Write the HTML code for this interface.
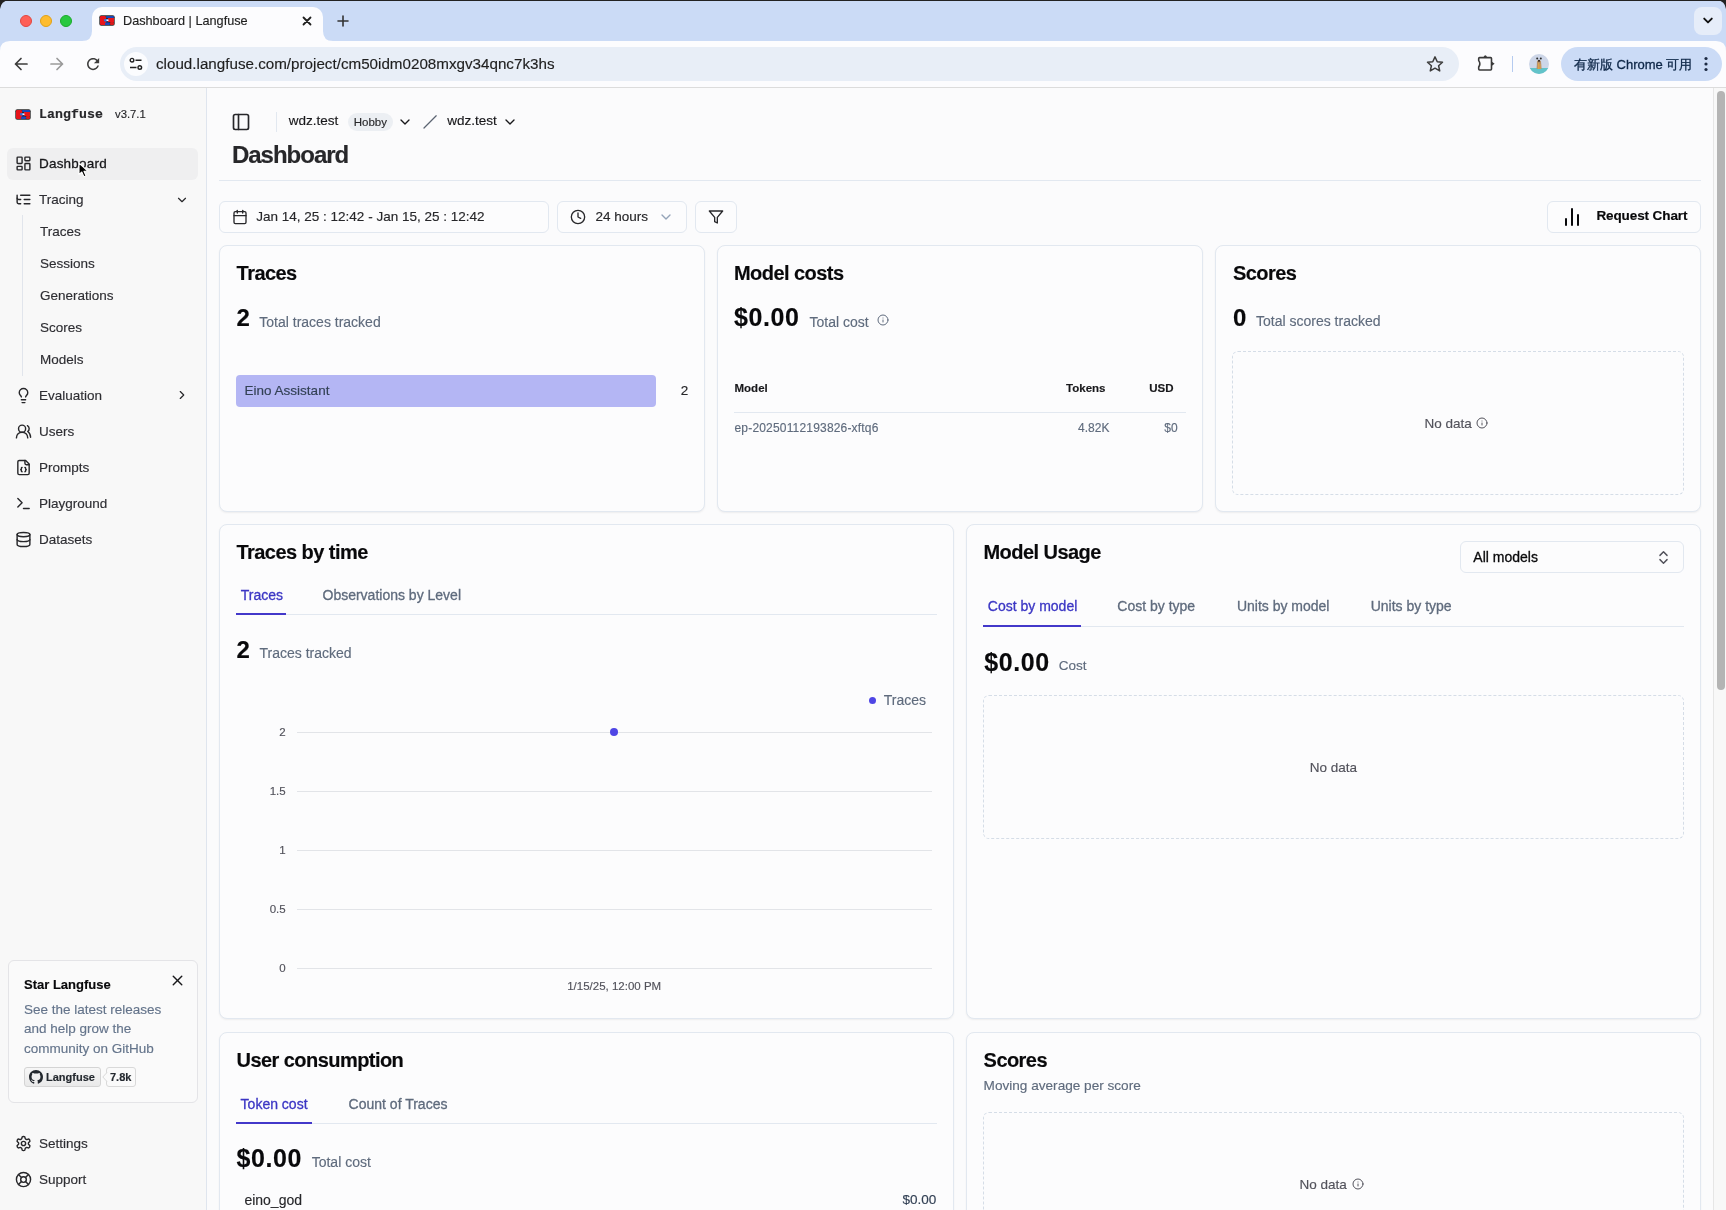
<!DOCTYPE html>
<html><head><meta charset="utf-8"><title>Dashboard | Langfuse</title>
<style>
*{box-sizing:border-box;margin:0;padding:0}
html,body{width:1726px;height:1210px;overflow:hidden;background:#fbfbfc;font-family:"Liberation Sans",sans-serif;color:#0f172a}
body{will-change:transform}
.a{-webkit-text-stroke:0.15px currentColor}
.a{position:absolute;white-space:nowrap}
svg{position:absolute;overflow:visible}
.ic{fill:none;stroke:currentColor;stroke-width:2;stroke-linecap:round;stroke-linejoin:round}
/* chrome */
#topline{left:0;top:0;width:1726px;height:1px;background:#222}
#tabstrip{left:0;top:1px;width:1726px;height:40px;background:#cbdbf6}
#toolbar{left:0;top:41px;width:1726px;height:46px;background:#fcfcfe}
#tbborder{left:0;top:87px;width:1726px;height:1px;background:#dcdcdc}
#tab{left:92px;top:7px;width:231px;height:36px;background:#fcfcfe;border-radius:10px 10px 0 0}
#omni{left:120px;top:47px;width:1339px;height:34px;background:#e8eef7;border-radius:17px}
#chromepill{left:1561px;top:47px;width:161px;height:34px;background:#cbdbf6;border-radius:17px}
/* sidebar */
#sidebar{left:0;top:88px;width:207px;height:1122px;background:#f8f8f8;border-right:1px solid #dfe5ee}
.nav{font-size:13.5px;color:#2e2e33}
.sub{font-size:13.5px;color:#2e2e33}
/* main */
.card{position:absolute;background:#fcfcfd;border:1px solid #e2e8f0;border-radius:8px}
.ttl{font-size:20px;font-weight:700;letter-spacing:-0.55px;color:#09090b}
.big{font-size:24px;font-weight:700;color:#09090b}
.muted{font-size:14px;color:#64748b}
.tab{font-size:14px;color:#64748b}
.tabA{font-size:14px;color:#4338ca}
.btn{position:absolute;border:1px solid #e2e8f0;border-radius:6px;background:#fcfcfd}
.dash{position:absolute;border:1px dashed #dbe2ea;border-radius:6px}
.grid{position:absolute;height:1px;background:#e5e7eb}
.ylab{font-size:11.5px;color:#52525b;text-align:right;width:30px}
</style></head><body>
<!-- ============ BROWSER CHROME ============ -->
<div id="topline" class="a"></div>
<div id="tabstrip" class="a"></div>
<div id="toolbar" class="a"></div>
<div id="tab" class="a"></div>
<div id="tbborder" class="a"></div>
<svg style="left:1717px;top:0" width="9" height="9"><path d="M0 0H9V9Q8 1 0 0Z" fill="#222"/></svg>
<svg style="left:1716px;top:41px" width="10" height="10"><path d="M10 0H0Q10 0 10 10Z" fill="#cbdbf6"/></svg>

<svg style="left:0;top:41px" width="10" height="10"><path d="M0 0H10Q0 0 0 10Z" fill="#cbdbf6"/></svg>

<div id="omni" class="a"></div>
<div id="chromepill" class="a"></div>

<!-- tab flares -->
<svg style="left:82px;top:31px" width="12" height="12"><path d="M0 10 Q10 10 10 0 L10 12 L0 12Z" fill="#fcfcfe"/></svg>
<svg style="left:321px;top:31px" width="12" height="12"><path d="M12 10 Q2 10 2 0 L2 12 L12 12Z" fill="#fcfcfe"/></svg>
<!-- window corner -->
<svg style="left:0;top:0" width="9" height="9"><path d="M0 0 H9 Q1 1 0 9Z" fill="#222"/></svg>
<!-- traffic lights -->
<div class="a" style="left:20px;top:15px;width:12px;height:12px;border-radius:6px;background:#fe5f57;border:0.5px solid #e2463f"></div>
<div class="a" style="left:40px;top:15px;width:12px;height:12px;border-radius:6px;background:#febc2e;border:0.5px solid #e1a116"></div>
<div class="a" style="left:60px;top:15px;width:12px;height:12px;border-radius:6px;background:#28c840;border:0.5px solid #1aab29"></div>
<!-- favicon -->
<svg style="left:99px;top:15px" width="16" height="11" viewBox="0 0 16 11">
 <rect x="0.3" y="0.3" width="15.4" height="10.4" rx="2" fill="#2a2a2a"/>
 <rect x="1" y="1" width="6" height="9" rx="1.2" fill="#e8141a"/>
 <rect x="9" y="3" width="6" height="4" fill="#e8141a"/>
 <rect x="11" y="7" width="4" height="3" rx="1" fill="#d61a1a"/>
 <rect x="7" y="1" width="8" height="2" rx="0.8" fill="#1747b8"/>
 <rect x="5" y="4" width="4" height="2.5" rx="1" fill="#2f6fe0"/>
 <rect x="6" y="7.5" width="5" height="2.5" rx="1" fill="#1a48c0"/>
 <rect x="7.5" y="4.5" width="2" height="1.5" fill="#f4f6ff"/>
</svg>
<div class="a" style="left:123px;top:12.5px;font-size:12.7px;color:#1f1f1f;line-height:16px">Dashboard | Langfuse</div>
<svg style="left:302px;top:16px" width="10" height="10" viewBox="0 0 10 10"><path d="M1.5 1.5L8.5 8.5M8.5 1.5L1.5 8.5" stroke="#1f1f1f" stroke-width="1.8" stroke-linecap="round"/></svg>
<svg style="left:337px;top:15px" width="12" height="12" viewBox="0 0 12 12"><path d="M6 1V11M1 6H11" stroke="#333" stroke-width="1.6" stroke-linecap="round"/></svg>
<!-- tab strip dropdown at right -->
<div class="a" style="left:1694px;top:7px;width:28px;height:28px;border-radius:8px;background:#e6edf9"></div>
<svg style="left:1703px;top:17px" width="10" height="7" viewBox="0 0 10 7"><path d="M1.2 1.6L5 5.4L8.8 1.6" stroke="#111" stroke-width="1.9" fill="none" stroke-linecap="round" stroke-linejoin="round"/></svg>
<!-- nav buttons -->
<svg style="left:13px;top:56px" width="16" height="16" viewBox="0 0 16 16"><path d="M14 8H2.5M8 2.5L2.5 8L8 13.5" stroke="#3c3c3c" stroke-width="1.7" fill="none" stroke-linecap="round" stroke-linejoin="round"/></svg>
<svg style="left:49px;top:56px" width="16" height="16" viewBox="0 0 16 16"><path d="M2 8H13.5M8 2.5L13.5 8L8 13.5" stroke="#9a9a9a" stroke-width="1.7" fill="none" stroke-linecap="round" stroke-linejoin="round"/></svg>
<svg style="left:84.3px;top:55.2px" width="18.2" height="18.2" viewBox="0 0 24 24"><path fill="#3c3c3c" d="M17.65 6.35C16.2 4.9 14.21 4 12 4c-4.42 0-7.99 3.58-7.99 8s3.57 8 7.99 8c3.73 0 6.84-2.55 7.73-6h-2.08c-.82 2.330-3.04 4-5.65 4-3.31 0-6-2.69-6-6s2.69-6 6-6c1.66 0 3.14.69 4.220 1.78L13 11h7V4l-2.35 2.35z"/></svg>
<div class="a" style="left:124px;top:52px;width:24px;height:24px;border-radius:12px;background:#fbfcfe"></div>
<svg style="left:129px;top:57px" width="14" height="14" viewBox="0 0 14 14"><circle cx="3" cy="3.2" r="1.8" stroke="#222" stroke-width="1.4" fill="none"/><path d="M6.5 3.2H12.5M1 10.5H7.5" stroke="#222" stroke-width="1.5"/><circle cx="10.8" cy="10.5" r="1.8" stroke="#222" stroke-width="1.4" fill="none"/></svg>
<div class="a" style="left:156px;top:55px;font-size:15.2px;color:#1f1f1f;line-height:18px">cloud.langfuse.com/project/cm50idm0208mxgv34qnc7k3hs</div>
<svg style="left:1426px;top:55px" width="18" height="18" viewBox="0 0 24 24"><polygon points="12 2.5 15 9 22 9.7 16.8 14.3 18.3 21.2 12 17.6 5.7 21.2 7.2 14.3 2 9.7 9 9" fill="none" stroke="#3c3c3c" stroke-width="2" stroke-linejoin="round"/></svg>
<svg style="left:1476px;top:53px" width="20" height="20" viewBox="0 0 20 20"><path d="M3.6 4.6H14.6Q15.5 4.6 15.5 5.5V16.1Q15.5 17 14.6 17H3.6Q2.7 17 2.7 16.1V14Q5 10.8 2.7 7.6V5.5Q2.7 4.6 3.6 4.6Z" fill="none" stroke="#3a3a3a" stroke-width="1.6" stroke-linejoin="round"/><path d="M7.4 4.2Q9.3 0.4 11.2 4.2Z" fill="#3a3a3a"/><path d="M15.6 8.6L18.6 10.8L15.6 13Z" fill="#3a3a3a"/></svg>
<div class="a" style="left:1512px;top:56px;width:1px;height:16px;background:#b5cbf0"></div>
<svg style="left:1529px;top:54px" width="20" height="20" viewBox="0 0 20 20"><defs><clipPath id="avc"><circle cx="10" cy="10" r="10"/></clipPath></defs><g clip-path="url(#avc)"><rect width="20" height="20" fill="#cdd6e8"/><rect y="14" width="20" height="6" fill="#62c3c9"/><path d="M8 7Q10 5.5 12 7L12.6 15H7.6Z" fill="#b9926a"/><path d="M9.6 9V15M11 10V15" stroke="#e4a64a" stroke-width="0.9"/><circle cx="8.2" cy="4.5" r="1" fill="#2a2a2a"/><circle cx="11.8" cy="4.5" r="1" fill="#2a2a2a"/><circle cx="10" cy="6.8" r="1.1" fill="#3a2a20"/></g></svg>
<div class="a" style="left:1574px;top:55.5px;font-size:13px;color:#0e2748;line-height:18px;-webkit-text-stroke:0.3px currentColor">有新版 Chrome 可用</div>
<svg style="left:1703px;top:56px" width="6" height="16" viewBox="0 0 6 16"><circle cx="3" cy="2.5" r="1.6" fill="#1d2b44"/><circle cx="3" cy="8" r="1.6" fill="#1d2b44"/><circle cx="3" cy="13.5" r="1.6" fill="#1d2b44"/></svg>

<div id="sidebar" class="a"></div>
<svg style="left:15px;top:109px" width="16" height="11" viewBox="0 0 16 11">
 <rect x="0.3" y="0.3" width="15.4" height="10.4" rx="2" fill="#2a2a2a"/>
 <rect x="1" y="1" width="6" height="9" rx="1.2" fill="#e8141a"/>
 <rect x="9" y="3" width="6" height="4" fill="#e8141a"/>
 <rect x="11" y="7" width="4" height="3" rx="1" fill="#d61a1a"/>
 <rect x="7" y="1" width="8" height="2" rx="0.8" fill="#1747b8"/>
 <rect x="5" y="4" width="4" height="2.5" rx="1" fill="#2f6fe0"/>
 <rect x="6" y="7.5" width="5" height="2.5" rx="1" fill="#1a48c0"/>
 <rect x="7.5" y="4.5" width="2" height="1.5" fill="#f4f6ff"/>
</svg>
<div class="a" style="left:39px;top:105.5px;font-family:'Liberation Mono',monospace;font-weight:700;font-size:13.2px;letter-spacing:0.1px;color:#27272a;line-height:18px">Langfuse</div>
<div class="a" style="left:115px;top:106px;font-size:11.3px;color:#27272a;line-height:16px">v3.7.1</div>
<div class="a" style="left:7px;top:148px;width:191px;height:32px;border-radius:6px;background:#efeff0"></div>
<svg style="left:14.5px;top:155.0px;color:#27272a" width="17" height="17" viewBox="0 0 24 24" class="ic" stroke-width="2"><rect x="3" y="3" width="7" height="9" rx="1"/><rect x="14" y="3" width="7" height="5" rx="1"/><rect x="14" y="12" width="7" height="9" rx="1"/><rect x="3" y="16" width="7" height="5" rx="1"/></svg>
<div class="a nav" style="left:39px;top:155.3px;line-height:18px;color:#18181b;-webkit-text-stroke:0.3px currentColor;letter-spacing:0.2px">Dashboard</div>
<svg style="left:14.5px;top:191.0px;color:#27272a" width="17" height="17" viewBox="0 0 24 24" class="ic" stroke-width="2"><path d="M21 12h-8"/><path d="M21 6H8"/><path d="M21 18h-8"/><path d="M3 6v4c0 1.1.9 2 2 2h3"/><path d="M3 10v6c0 1.1.9 2 2 2h3"/></svg>
<div class="a nav" style="left:39px;top:191.3px;line-height:18px;">Tracing</div>
<svg style="left:14.5px;top:386.5px;color:#27272a" width="17" height="17" viewBox="0 0 24 24" class="ic" stroke-width="2"><path d="M15 14c.2-1 .7-1.7 1.5-2.5 1-.9 1.5-2.2 1.5-3.5A6 6 0 0 0 6 8c0 1 .2 2.2 1.5 3.5.7.7 1.3 1.5 1.5 2.5"/><path d="M9 18h6"/><path d="M10 22h4"/></svg>
<div class="a nav" style="left:39px;top:386.8px;line-height:18px;">Evaluation</div>
<svg style="left:14.5px;top:422.5px;color:#27272a" width="17" height="17" viewBox="0 0 24 24" class="ic" stroke-width="2"><path d="M18 21a8 8 0 0 0-16 0"/><circle cx="10" cy="8" r="5"/><path d="M22 20c0-3.37-2-6.5-4-8a5 5 0 0 0-.45-8.3"/></svg>
<div class="a nav" style="left:39px;top:422.8px;line-height:18px;">Users</div>
<svg style="left:14.5px;top:458.5px;color:#27272a" width="17" height="17" viewBox="0 0 24 24" class="ic" stroke-width="2"><path d="M15 2H6a2 2 0 0 0-2 2v16a2 2 0 0 0 2 2h12a2 2 0 0 0 2-2V7Z"/><path d="M14 2v4a2 2 0 0 0 2 2h4"/><path d="M10 12a1 1 0 0 0-1 1v1a1 1 0 0 1-1 1 1 1 0 0 1 1 1v1a1 1 0 0 0 1 1"/><path d="M14 18a1 1 0 0 0 1-1v-1a1 1 0 0 1 1-1 1 1 0 0 1-1-1v-1a1 1 0 0 0-1-1"/></svg>
<div class="a nav" style="left:39px;top:458.8px;line-height:18px;">Prompts</div>
<svg style="left:14.5px;top:494.5px;color:#27272a" width="17" height="17" viewBox="0 0 24 24" class="ic" stroke-width="2"><polyline points="4 17 10 11 4 5"/><line x1="12" x2="20" y1="19" y2="19"/></svg>
<div class="a nav" style="left:39px;top:494.8px;line-height:18px;">Playground</div>
<svg style="left:14.5px;top:530.5px;color:#27272a" width="17" height="17" viewBox="0 0 24 24" class="ic" stroke-width="2"><ellipse cx="12" cy="5" rx="9" ry="3"/><path d="M3 5V19A9 3 0 0 0 21 19V5"/><path d="M3 12A9 3 0 0 0 21 12"/></svg>
<div class="a nav" style="left:39px;top:530.8px;line-height:18px;">Datasets</div>
<svg style="left:14.5px;top:1135.0px;color:#27272a" width="17" height="17" viewBox="0 0 24 24" class="ic" stroke-width="2"><path d="M12.22 2h-.44a2 2 0 0 0-2 2v.18a2 2 0 0 1-1 1.73l-.43.25a2 2 0 0 1-2 0l-.15-.08a2 2 0 0 0-2.73.73l-.22.38a2 2 0 0 0 .73 2.73l.15.1a2 2 0 0 1 1 1.72v.51a2 2 0 0 1-1 1.74l-.15.09a2 2 0 0 0-.73 2.73l.22.38a2 2 0 0 0 2.73.73l.15-.08a2 2 0 0 1 2 0l.43.25a2 2 0 0 1 1 1.73V20a2 2 0 0 0 2 2h.44a2 2 0 0 0 2-2v-.18a2 2 0 0 1 1-1.73l.43-.25a2 2 0 0 1 2 0l.15.08a2 2 0 0 0 2.73-.73l.22-.39a2 2 0 0 0-.73-2.73l-.15-.08a2 2 0 0 1-1-1.74v-.5a2 2 0 0 1 1-1.74l.15-.09a2 2 0 0 0 .73-2.73l-.22-.38a2 2 0 0 0-2.73-.73l-.15.08a2 2 0 0 1-2 0l-.43-.25a2 2 0 0 1-1-1.73V4a2 2 0 0 0-2-2z"/><circle cx="12" cy="12" r="3"/></svg>
<div class="a nav" style="left:39px;top:1135.3px;line-height:18px;">Settings</div>
<svg style="left:14.5px;top:1171.0px;color:#27272a" width="17" height="17" viewBox="0 0 24 24" class="ic" stroke-width="2"><circle cx="12" cy="12" r="10"/><path d="m4.93 4.93 4.24 4.24"/><path d="m14.83 9.17 4.24-4.24"/><path d="m14.83 14.83 4.24 4.24"/><path d="m9.17 14.83-4.24 4.24"/><circle cx="12" cy="12" r="4"/></svg>
<div class="a nav" style="left:39px;top:1171.3px;line-height:18px;">Support</div>
<svg style="left:175px;top:193px;color:#27272a" width="14" height="14" viewBox="0 0 24 24" class="ic" stroke-width="2.2"><path d="m6 9 6 6 6-6"/></svg>
<svg style="left:175px;top:388px;color:#27272a" width="14" height="14" viewBox="0 0 24 24" class="ic" stroke-width="2.2"><path d="m9 18 6-6-6-6"/></svg>
<div class="a" style="left:22px;top:215px;width:1px;height:161px;background:#e1e5ec"></div>
<div class="a sub" style="left:40px;top:222.8px;line-height:18px">Traces</div>
<div class="a sub" style="left:40px;top:254.8px;line-height:18px">Sessions</div>
<div class="a sub" style="left:40px;top:286.8px;line-height:18px">Generations</div>
<div class="a sub" style="left:40px;top:318.8px;line-height:18px">Scores</div>
<div class="a sub" style="left:40px;top:350.8px;line-height:18px">Models</div>
<div class="a" style="left:8px;top:960px;width:190px;height:143px;border:1px solid #e4e4e7;border-radius:6px;background:#fafafa"></div>
<div class="a" style="left:24px;top:977px;font-size:13px;font-weight:700;color:#09090b;line-height:16px">Star Langfuse</div>
<svg style="left:168.5px;top:971.5px;color:#18181b" width="17" height="17" viewBox="0 0 24 24" class="ic" stroke-width="2.2"><path d="M18 6 6 18"/><path d="m6 6 12 12"/></svg>
<div class="a" style="left:24px;top:999.5px;font-size:13.5px;color:#64748b;line-height:19.6px">See the latest releases<br>and help grow the<br>community on GitHub</div>
<div class="a" style="left:24px;top:1067px;width:77px;height:20px;border:1px solid #d4d4d4;border-radius:3px;background:linear-gradient(#f7f7f7,#e9e9e9)"></div>
<svg style="left:29px;top:1070px" width="14" height="14" viewBox="0 0 16 16"><path fill="#24292f" d="M8 0C3.58 0 0 3.58 0 8c0 3.54 2.29 6.53 5.47 7.59.4.07.55-.17.55-.38 0-.19-.01-.82-.01-1.49-2.01.37-2.53-.49-2.69-.94-.09-.23-.48-.94-.82-1.13-.28-.15-.68-.52-.01-.53.63-.01 1.08.58 1.23.82.72 1.21 1.87.87 2.33.66.07-.52.28-.87.51-1.07-1.78-.2-3.64-.89-3.64-3.95 0-.87.31-1.59.82-2.15-.08-.2-.36-1.02.08-2.12 0 0 .67-.21 2.2.82.64-.18 1.32-.27 2-.27.68 0 1.36.09 2 .27 1.53-1.04 2.2-.82 2.2-.82.44 1.1.16 1.92.08 2.12.51.56.82 1.27.82 2.15 0 3.07-1.87 3.75-3.65 3.95.29.25.54.73.54 1.48 0 1.07-.01 1.93-.01 2.2 0 .21.15.46.55.38A8.013 8.013 0 0016 8c0-4.42-3.58-8-8-8z"/></svg>
<div class="a" style="left:46px;top:1070px;font-size:11px;font-weight:700;color:#24292f;line-height:14px">Langfuse</div>
<div class="a" style="left:106px;top:1067px;width:30px;height:20px;border:1px solid #d9d9d9;border-radius:3px;background:#fafafa"></div>
<svg style="left:102px;top:1072px" width="5" height="10"><path d="M5 0.5L0.8 5L5 9.5" fill="#fafafa" stroke="#d9d9d9" stroke-width="1"/></svg>
<div class="a" style="left:110px;top:1070px;font-size:11px;font-weight:700;color:#24292f;line-height:14px">7.8k</div>

<svg style="left:78px;top:162px" width="12" height="18" viewBox="0 0 12 18"><path d="M1 1V12.6L3.8 10L5.9 14.8L8 13.9L6 9.2H9.8Z" fill="#000" stroke="#fff" stroke-width="1.1" stroke-linejoin="round"/></svg>
<!--MAIN-->
<svg style="left:230.7px;top:111.7px;color:#27272a" width="20" height="20" viewBox="0 0 24 24" class="ic" stroke-width="2"><rect width="18" height="18" x="3" y="3" rx="2"/><path d="M9 3v18"/></svg>
<div class="a" style="left:276px;top:112px;width:1px;height:20px;background:#e2e8f0"></div>
<div class="a" style="left:288.8px;top:113.36px;font-size:13.5px;line-height:15.52px;color:#18181b;">wdz.test</div>
<div class="a" style="left:348px;top:113px;width:45px;height:18px;background:#eceff3;border-radius:9px"></div>
<div class="a" style="left:353.7px;top:115.61px;font-size:11.5px;line-height:13.22px;color:#27272a;">Hobby</div>
<svg style="left:396.6px;top:113.8px;color:#18181b" width="16" height="16" viewBox="0 0 24 24" class="ic" stroke-width="2.1"><path d="m6 9 6 6 6-6"/></svg>
<svg style="left:422px;top:114px" width="16" height="16"><path d="M2 14L14.2 1.8" stroke="#5b6472" stroke-width="1.25" stroke-linecap="round"/></svg>
<div class="a" style="left:447.3px;top:113.36px;font-size:13.5px;line-height:15.52px;color:#18181b;">wdz.test</div>
<svg style="left:502.4px;top:113.8px;color:#18181b" width="16" height="16" viewBox="0 0 24 24" class="ic" stroke-width="2.1"><path d="m6 9 6 6 6-6"/></svg>
<div class="a" style="left:231.9px;top:141.28px;font-size:24px;line-height:27.6px;color:#27272a;font-weight:700;letter-spacing:-1px;">Dashboard</div>
<div class="a" style="left:219px;top:180px;width:1482px;height:1px;background:#e2e8f0"></div>
<div class="a" style="left:219px;top:201px;width:330px;height:32px;border:1px solid #e2e8f0;border-radius:6px;background:#fcfcfd"></div>
<svg style="left:232px;top:209px;color:#27272a" width="16" height="16" viewBox="0 0 24 24" class="ic" stroke-width="2"><rect width="18" height="18" x="3" y="4" rx="2"/><path d="M16 2v4"/><path d="M8 2v4"/><path d="M3 10h18"/></svg>
<div class="a" style="left:256.3px;top:208.76px;font-size:13.5px;line-height:15.52px;color:#27272a;">Jan 14, 25 : 12:42 - Jan 15, 25 : 12:42</div>
<div class="a" style="left:557px;top:201px;width:130px;height:32px;border:1px solid #e2e8f0;border-radius:6px;background:#fcfcfd"></div>
<svg style="left:570px;top:208.8px;color:#27272a" width="16" height="16" viewBox="0 0 24 24" class="ic" stroke-width="2"><circle cx="12" cy="12" r="10"/><polyline points="12 6 12 12 16 14"/></svg>
<div class="a" style="left:595.4px;top:208.76px;font-size:13.5px;line-height:15.52px;color:#27272a;">24 hours</div>
<svg style="left:658.2px;top:208.5px;color:#94a3b8" width="16" height="16" viewBox="0 0 24 24" class="ic" stroke-width="2"><path d="m6 9 6 6 6-6"/></svg>
<div class="a" style="left:695px;top:201px;width:42px;height:32px;border:1px solid #e2e8f0;border-radius:6px;background:#fcfcfd"></div>
<svg style="left:708.2px;top:208.6px;color:#27272a" width="16" height="16" viewBox="0 0 24 24" class="ic" stroke-width="2"><polygon points="22 3 2 3 10 12.46 10 19 14 21 14 12.46 22 3"/></svg>
<div class="a" style="left:1547px;top:201px;width:154px;height:32px;border:1px solid #e2e8f0;border-radius:6px;background:#fcfcfd"></div>
<svg style="left:1560px;top:204.8px;color:#09090b" width="24" height="24" viewBox="0 0 24 24" class="ic" stroke-width="2"><path d="M18 20V10"/><path d="M12 20V4"/><path d="M6 20v-6"/></svg>
<div class="a" style="left:1596.4px;top:208.46px;font-size:13.5px;line-height:15.52px;color:#09090b;font-weight:700;letter-spacing:-0.1px;">Request Chart</div>
<div class="a" style="left:219px;top:245px;width:486px;height:267px;border:1px solid #e2e8f0;border-radius:8px;background:#fcfcfd;box-shadow:0 1px 2px rgba(0,0,0,0.06)"></div>
<div class="a" style="left:717px;top:245px;width:486px;height:267px;border:1px solid #e2e8f0;border-radius:8px;background:#fcfcfd;box-shadow:0 1px 2px rgba(0,0,0,0.06)"></div>
<div class="a" style="left:1215px;top:245px;width:486px;height:267px;border:1px solid #e2e8f0;border-radius:8px;background:#fcfcfd;box-shadow:0 1px 2px rgba(0,0,0,0.06)"></div>
<div class="a" style="left:236.6px;top:261.57px;font-size:20px;line-height:23.0px;color:#09090b;font-weight:700;letter-spacing:-0.55px;">Traces</div>
<div class="a" style="left:236.6px;top:304.38px;font-size:24px;line-height:27.6px;color:#09090b;font-weight:700;">2</div>
<div class="a" style="left:259.3px;top:313.6px;font-size:14px;line-height:16.1px;color:#5f6b7d;">Total traces tracked</div>
<div class="a" style="left:236px;top:375px;width:420px;height:32px;background:#b4b6f4;border-radius:4px"></div>
<div class="a" style="left:244.6px;top:383.46px;font-size:13.5px;line-height:15.52px;color:#334155;">Eino Assistant</div>
<div class="a" style="left:680.7px;top:382.96px;font-size:13.5px;line-height:15.52px;color:#27272a;">2</div>
<div class="a" style="left:734px;top:261.77px;font-size:20px;line-height:23.0px;color:#09090b;font-weight:700;letter-spacing:-0.55px;">Model costs</div>
<div class="a" style="left:734px;top:303.46px;font-size:25px;line-height:28.75px;color:#09090b;font-weight:700;letter-spacing:0.6px;">$0.00</div>
<div class="a" style="left:809.5px;top:313.6px;font-size:14px;line-height:16.1px;color:#5f6b7d;">Total cost</div>
<svg style="left:876.8px;top:313.9px;color:#5f6b7d" width="12" height="12" viewBox="0 0 24 24" class="ic" stroke-width="2"><circle cx="12" cy="12" r="10"/><path d="M12 16v-4"/><path d="M12 8h.01"/></svg>
<div class="a" style="left:734.5px;top:382.41px;font-size:11.5px;line-height:13.22px;color:#18181b;font-weight:700;">Model</div>
<div class="a" style="left:705.5px;width:400px;text-align:right;top:382.41px;font-size:11.5px;line-height:13.22px;color:#18181b;font-weight:700;">Tokens</div>
<div class="a" style="left:773.5px;width:400px;text-align:right;top:382.41px;font-size:11.5px;line-height:13.22px;color:#18181b;font-weight:700;">USD</div>
<div class="a" style="left:734px;top:412px;width:452px;height:1px;background:#e2e8f0"></div>
<div class="a" style="left:734.5px;top:422.34px;font-size:12px;line-height:13.8px;color:#5f6b7d;letter-spacing:0.18px;">ep-20250112193826-xftq6</div>
<div class="a" style="left:709.4000000000001px;width:400px;text-align:right;top:421.94px;font-size:12px;line-height:13.8px;color:#5f6b7d;">4.82K</div>
<div class="a" style="left:777.7px;width:400px;text-align:right;top:421.94px;font-size:12px;line-height:13.8px;color:#5f6b7d;">$0</div>
<div class="a" style="left:1232.9px;top:261.77px;font-size:20px;line-height:23.0px;color:#09090b;font-weight:700;letter-spacing:-0.55px;">Scores</div>
<div class="a" style="left:1232.9px;top:304.08px;font-size:24px;line-height:27.6px;color:#09090b;font-weight:700;">0</div>
<div class="a" style="left:1256px;top:313.3px;font-size:14px;line-height:16.1px;color:#5f6b7d;">Total scores tracked</div>
<div class="a" style="left:1232px;top:351px;width:452px;height:144px;border:1px dashed #d5dde7;border-radius:6px"></div>
<div class="a" style="left:1424.4px;top:416.06px;font-size:13.5px;line-height:15.52px;color:#52525b;">No data</div>
<svg style="left:1476px;top:417px;color:#52525b" width="12" height="12" viewBox="0 0 24 24" class="ic" stroke-width="2"><circle cx="12" cy="12" r="10"/><path d="M12 16v-4"/><path d="M12 8h.01"/></svg>
<div class="a" style="left:219px;top:524px;width:735px;height:495px;border:1px solid #e2e8f0;border-radius:8px;background:#fcfcfd;box-shadow:0 1px 2px rgba(0,0,0,0.06)"></div>
<div class="a" style="left:966px;top:524px;width:735px;height:495px;border:1px solid #e2e8f0;border-radius:8px;background:#fcfcfd;box-shadow:0 1px 2px rgba(0,0,0,0.06)"></div>
<div class="a" style="left:236.5px;top:540.97px;font-size:20px;line-height:23.0px;color:#09090b;font-weight:700;letter-spacing:-0.55px;">Traces by time</div>
<div class="a" style="left:236px;top:614px;width:701px;height:1px;background:#e2e8f0"></div>
<div class="a" style="left:240.8px;top:587.1px;font-size:14px;line-height:16.1px;color:#3b36c4;-webkit-text-stroke:0.3px currentColor;">Traces</div>
<div class="a" style="left:322.5px;top:587.1px;font-size:14px;line-height:16.1px;color:#5f6b7d;-webkit-text-stroke:0.3px currentColor;">Observations by Level</div>
<div class="a" style="left:236px;top:613px;width:50px;height:2px;background:#4338ca"></div>
<div class="a" style="left:236.5px;top:635.98px;font-size:24px;line-height:27.6px;color:#09090b;font-weight:700;">2</div>
<div class="a" style="left:259.5px;top:645.2px;font-size:14px;line-height:16.1px;color:#5f6b7d;">Traces tracked</div>
<div class="a" style="left:869.3px;top:696.7px;width:7px;height:7px;background:#4f46e5;border-radius:50%"></div>
<div class="a" style="left:883.7px;top:692.3px;font-size:14px;line-height:16.1px;color:#5f6b7d;">Traces</div>
<div class="a" style="left:297px;top:732px;width:635px;height:1px;background:#e2e4e8"></div>
<div class="a" style="left:-114.30000000000001px;width:400px;text-align:right;top:725.71px;font-size:11.5px;line-height:13.22px;color:#52525b;">2</div>
<div class="a" style="left:297px;top:791px;width:635px;height:1px;background:#e2e4e8"></div>
<div class="a" style="left:-114.30000000000001px;width:400px;text-align:right;top:784.71px;font-size:11.5px;line-height:13.22px;color:#52525b;">1.5</div>
<div class="a" style="left:297px;top:850px;width:635px;height:1px;background:#e2e4e8"></div>
<div class="a" style="left:-114.30000000000001px;width:400px;text-align:right;top:843.71px;font-size:11.5px;line-height:13.22px;color:#52525b;">1</div>
<div class="a" style="left:297px;top:909px;width:635px;height:1px;background:#e2e4e8"></div>
<div class="a" style="left:-114.30000000000001px;width:400px;text-align:right;top:902.71px;font-size:11.5px;line-height:13.22px;color:#52525b;">0.5</div>
<div class="a" style="left:297px;top:968px;width:635px;height:1px;background:#e2e4e8"></div>
<div class="a" style="left:-114.30000000000001px;width:400px;text-align:right;top:961.71px;font-size:11.5px;line-height:13.22px;color:#52525b;">0</div>
<div class="a" style="left:610.4px;top:727.9px;width:8px;height:8px;background:#4f46e5;border-radius:50%"></div>
<div class="a" style="left:414.20000000000005px;width:400px;text-align:center;top:979.51px;font-size:11.5px;line-height:13.22px;color:#52525b;">1/15/25, 12:00 PM</div>
<div class="a" style="left:983.5px;top:540.87px;font-size:20px;line-height:23.0px;color:#09090b;font-weight:700;letter-spacing:-0.55px;">Model Usage</div>
<div class="a" style="left:1460px;top:541px;width:224px;height:32px;border:1px solid #e2e8f0;border-radius:6px;background:#fcfcfd"></div>
<div class="a" style="left:1473.3px;top:548.8px;font-size:14px;line-height:16.1px;color:#09090b;-webkit-text-stroke:0.3px currentColor;">All models</div>
<svg style="left:1654.5px;top:548.6px;color:#52525b" width="17" height="17" viewBox="0 0 24 24" class="ic" stroke-width="2"><path d="m7 15 5 5 5-5"/><path d="m7 9 5-5 5 5"/></svg>
<div class="a" style="left:983px;top:626px;width:701px;height:1px;background:#e2e8f0"></div>
<div class="a" style="left:987.8px;top:598.0px;font-size:14px;line-height:16.1px;color:#3b36c4;-webkit-text-stroke:0.3px currentColor;">Cost by model</div>
<div class="a" style="left:1117.3px;top:598.0px;font-size:14px;line-height:16.1px;color:#5f6b7d;-webkit-text-stroke:0.3px currentColor;">Cost by type</div>
<div class="a" style="left:1236.9px;top:598.0px;font-size:14px;line-height:16.1px;color:#5f6b7d;-webkit-text-stroke:0.3px currentColor;">Units by model</div>
<div class="a" style="left:1370.7px;top:598.0px;font-size:14px;line-height:16.1px;color:#5f6b7d;-webkit-text-stroke:0.3px currentColor;">Units by type</div>
<div class="a" style="left:983px;top:625px;width:98px;height:2px;background:#4338ca"></div>
<div class="a" style="left:984.3px;top:647.56px;font-size:25px;line-height:28.75px;color:#09090b;font-weight:700;letter-spacing:0.6px;">$0.00</div>
<div class="a" style="left:1058.7px;top:657.56px;font-size:13.5px;line-height:15.52px;color:#5f6b7d;">Cost</div>
<div class="a" style="left:983px;top:695px;width:701px;height:144px;border:1px dashed #d5dde7;border-radius:6px"></div>
<div class="a" style="left:1309.8px;top:759.86px;font-size:13.5px;line-height:15.52px;color:#52525b;">No data</div>
<div class="a" style="left:219px;top:1032px;width:735px;height:300px;border:1px solid #e2e8f0;border-radius:8px;background:#fcfcfd;box-shadow:0 1px 2px rgba(0,0,0,0.06)"></div>
<div class="a" style="left:966px;top:1032px;width:735px;height:300px;border:1px solid #e2e8f0;border-radius:8px;background:#fcfcfd;box-shadow:0 1px 2px rgba(0,0,0,0.06)"></div>
<div class="a" style="left:236.5px;top:1048.77px;font-size:20px;line-height:23.0px;color:#09090b;font-weight:700;letter-spacing:-0.55px;">User consumption</div>
<div class="a" style="left:236px;top:1123px;width:701px;height:1px;background:#e2e8f0"></div>
<div class="a" style="left:240.6px;top:1095.7px;font-size:14px;line-height:16.1px;color:#3b36c4;-webkit-text-stroke:0.3px currentColor;">Token cost</div>
<div class="a" style="left:348.6px;top:1095.7px;font-size:14px;line-height:16.1px;color:#5f6b7d;-webkit-text-stroke:0.3px currentColor;">Count of Traces</div>
<div class="a" style="left:236px;top:1122px;width:76px;height:2px;background:#4338ca"></div>
<div class="a" style="left:236.5px;top:1144.16px;font-size:25px;line-height:28.75px;color:#09090b;font-weight:700;letter-spacing:0.6px;">$0.00</div>
<div class="a" style="left:311.7px;top:1154.0px;font-size:14px;line-height:16.1px;color:#5f6b7d;">Total cost</div>
<div class="a" style="left:244.4px;top:1192.3px;font-size:14px;line-height:16.1px;color:#27272a;">eino_god</div>
<div class="a" style="left:536.2px;width:400px;text-align:right;top:1191.66px;font-size:13.5px;line-height:15.52px;color:#334155;">$0.00</div>
<div class="a" style="left:983.6px;top:1048.77px;font-size:20px;line-height:23.0px;color:#09090b;font-weight:700;letter-spacing:-0.55px;">Scores</div>
<div class="a" style="left:983.6px;top:1077.77px;font-size:13.6px;line-height:15.64px;color:#5f6b7d;">Moving average per score</div>
<div class="a" style="left:983px;top:1112px;width:701px;height:200px;border:1px dashed #d5dde7;border-radius:6px"></div>
<div class="a" style="left:1299.5px;top:1177.36px;font-size:13.5px;line-height:15.52px;color:#52525b;">No data</div>
<svg style="left:1352.1px;top:1178.2px;color:#52525b" width="12" height="12" viewBox="0 0 24 24" class="ic" stroke-width="2"><circle cx="12" cy="12" r="10"/><path d="M12 16v-4"/><path d="M12 8h.01"/></svg>
<div class="a" style="left:1713px;top:88px;width:13px;height:1122px;background:#f8f8f8;border-left:1px solid #e6e6e6"></div>
<div class="a" style="left:1717px;top:91px;width:8px;height:599px;background:#b4b4b4;border-radius:4px"></div>
<!--/MAIN-->
</body></html>
